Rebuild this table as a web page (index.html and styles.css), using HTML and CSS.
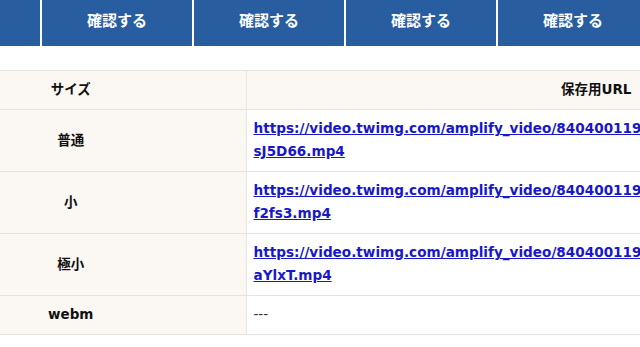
FILE: index.html
```html
<!DOCTYPE html>
<html lang="ja">
<head>
    <meta charset="UTF-8">
    <meta name="viewport" content="width=device-width, initial-scale=1.0">
    <title>動画保存</title>
    <link rel="stylesheet" href="styles.css">
</head>
<body>
<div class="page">
    <div class="actions">
        <button class="action-btn">確認する</button>
        <button class="action-btn">確認する</button>
        <button class="action-btn">確認する</button>
        <button class="action-btn">確認する</button>
        <button class="action-btn">確認する</button>
    </div>
    <table class="result">
        <tr>
            <th class="size-col">サイズ</th>
            <th class="url-col">保存用URL</th>
        </tr>
        <tr>
            <th class="size-col">普通</th>
            <td class="url-col"><a href="#">https://video.twimg.com/amplify_video/840400119925075968/vid/1280x720/Xk9Tq2<wbr>sJ5D66.mp4</a></td>
        </tr>
        <tr>
            <th class="size-col">小</th>
            <td class="url-col"><a href="#">https://video.twimg.com/amplify_video/840400119925075968/vid/640x360/Qm4Rw8<wbr>f2fs3.mp4</a></td>
        </tr>
        <tr>
            <th class="size-col">極小</th>
            <td class="url-col"><a href="#">https://video.twimg.com/amplify_video/840400119925075968/vid/320x180/Hb7Nc1<wbr>aYlxT.mp4</a></td>
        </tr>
        <tr>
            <th class="size-col">webm</th>
            <td class="url-col empty">---</td>
        </tr>
    </table>
</div>
</body>
</html>
```
FILE: styles.css
```css
html, body {
    margin: 0;
    padding: 0;
    overflow: hidden;
    background: #fff;
}
.page {
    font-family: "DejaVu Sans", "Noto Sans CJK JP", sans-serif;
    color: #111;
}
/* row of blue buttons, runs off both edges */
.actions {
    display: flex;
    gap: 2px;
    margin-left: -110px;
}
.action-btn {
    flex: 0 0 150px;
    border: 0;
    margin: 0;
    padding: 8px 0 14px;
    background: #285e9f;
    color: #fff;
    font-family: "Noto Sans CJK JP", sans-serif;
    font-size: 15px;
    font-weight: bold;
    line-height: 24px;
}
.result {
    margin-top: 24px;
    margin-left: -104px;
    border-collapse: collapse;
    table-layout: fixed;
    width: 1050px;
}
.result th, .result td {
    box-sizing: border-box;
    border-top: 1px solid #e6e2de;
    border-bottom: 1px solid #e6e2de;
    padding: 7px 7px 8px;
    line-height: 23px;
    font-size: 13.5px;
}
.size-col {
    width: 350px;
    background: #fbf7f3;
    border-right: 1px solid #e8e4e0;
    text-align: center;
    font-weight: bold;
}
th.url-col {
    width: 700px;
    background: #fbf7f3;
    text-align: center;
}
td.url-col {
    text-align: left;
    background: #fff;
}
.url-col a {
    color: #1818c8;
    font-weight: bold;
    font-size: 13.6px;
}
.empty {
    color: #333;
}
```
